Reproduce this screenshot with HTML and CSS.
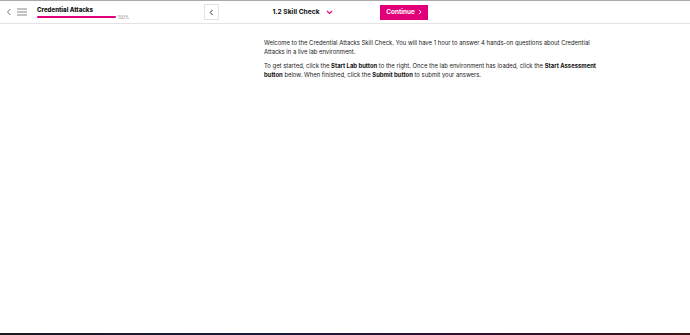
FILE: index.html
```html
<!DOCTYPE html>
<html lang="en">
<head>
    <meta charset="UTF-8">
    <meta name="viewport" content="width=device-width, initial-scale=1.0">
    <title>1.2 Skill Check</title>
    <link rel="stylesheet" href="styles.css">
</head>
<body>
    <header class="topbar">
        <div class="course">
            <span class="back">
                <svg width="6" height="8" viewBox="0 0 6 8"><path d="M4.5 1 L1.5 4 L4.5 7" fill="none" stroke="#777" stroke-width="1"/></svg>
            </span>
            <span class="menu">
                <svg width="10" height="8" viewBox="0 0 10 8"><path d="M0 1 H10 M0 4 H10 M0 7 H10" stroke="#888" stroke-width="1.2"/></svg>
            </span>
            <div class="course-info">
                <div class="course-title">Credential Attacks</div>
                <div class="progress">
                    <div class="progress-bar"><div class="progress-fill" style="width: 100%"></div></div>
                    <span class="progress-label">100%</span>
                </div>
            </div>
        </div>
        <nav class="lesson-nav">
            <a class="prev" href="#">
                <svg width="5" height="7" viewBox="0 0 5 7"><path d="M3.5 1 L1.2 3.5 L3.5 6" fill="none" stroke="#333" stroke-width="1"/></svg>
            </a>
            <div class="lesson-title">
                1.2 Skill Check
                <svg width="7" height="5" viewBox="0 0 7 5"><path d="M1 1 L3.5 3.5 L6 1" fill="none" stroke="#e2007a" stroke-width="1.1"/></svg>
            </div>
            <a class="continue" href="#">Continue
                <svg width="4" height="6" viewBox="0 0 4 6"><path d="M1 0.8 L3 3 L1 5.2" fill="none" stroke="#fff" stroke-width="0.9"/></svg>
            </a>
        </nav>
    </header>

    <main class="content">
        <p>Welcome to the Credential Attacks Skill Check. You will have 1 hour to answer 4 hands-on questions about Credential Attacks in a live lab environment.</p>
        <p>To get started, click the <b>Start Lab button</b> to the right. Once the lab environment has loaded, click the <b>Start Assessment button</b> below. When finished, click the <b>Submit button</b> to submit your answers.</p>
    </main>

    <div class="footer-line"></div>
</body>
</html>
```

FILE: styles.css
```css
html, body {
    height: 100%;
}
body {
    font-family: Inter, "Noto Sans", sans-serif;
    margin: 0;
    padding: 0;
    background-color: #fff;
    color: #222;
    display: flex;
    flex-direction: column;
}
.topbar {
    display: flex;
    align-items: center;
    height: 22px;
    border-top: 1px solid #a9a9a9;
    border-bottom: 1px solid #e4e4e4;
}
.course {
    width: 204px;
    display: flex;
    align-items: center;
}
.back {
    display: flex;
    margin-left: 6px;
}
.menu {
    display: flex;
    margin-left: 5px;
}
.course-info {
    margin-left: 10px;
    padding-top: 1px;
}
.course-title {
    font-size: 6.1px;
    font-weight: 800;
    color: #111;
    line-height: 8px;
}
.progress {
    display: flex;
    align-items: center;
    margin-top: 1px;
}
.progress-bar {
    width: 79px;
    height: 2px;
    background-color: #eee;
    border-radius: 1px;
}
.progress-fill {
    height: 100%;
    background-color: #e2007a;
    border-radius: 1px;
}
.progress-label {
    font-size: 4.2px;
    color: #888;
    margin-left: 2px;
}
.lesson-nav {
    display: flex;
    align-items: center;
}
.prev {
    width: 13px;
    height: 14px;
    border: 1px solid #e3e3e3;
    display: flex;
    align-items: center;
    justify-content: center;
}
.lesson-title {
    width: 161px;
    display: flex;
    align-items: center;
    justify-content: center;
    gap: 6px;
    font-size: 6.7px;
    font-weight: 700;
    color: #111;
    padding-left: 6px;
    box-sizing: border-box;
}
.continue {
    width: 48px;
    height: 15px;
    background-color: #e2007a;
    color: #fff;
    font-size: 6.4px;
    font-weight: 700;
    text-decoration: none;
    display: flex;
    align-items: center;
    justify-content: center;
    gap: 3px;
}
.content {
    flex: 1;
    padding: 14px 0 0 264px;
    width: 332px;
}
.content p {
    font-size: 5.9px;
    line-height: 9px;
    margin: 0 0 5px;
    color: #222;
}
.content b {
    font-weight: 650;
    color: #111;
}
.footer-line {
    height: 2px;
    background: linear-gradient(90deg, #1a1a22, #1b1a40 40%, #2e0f33 65%, #3f1416);
}
```
